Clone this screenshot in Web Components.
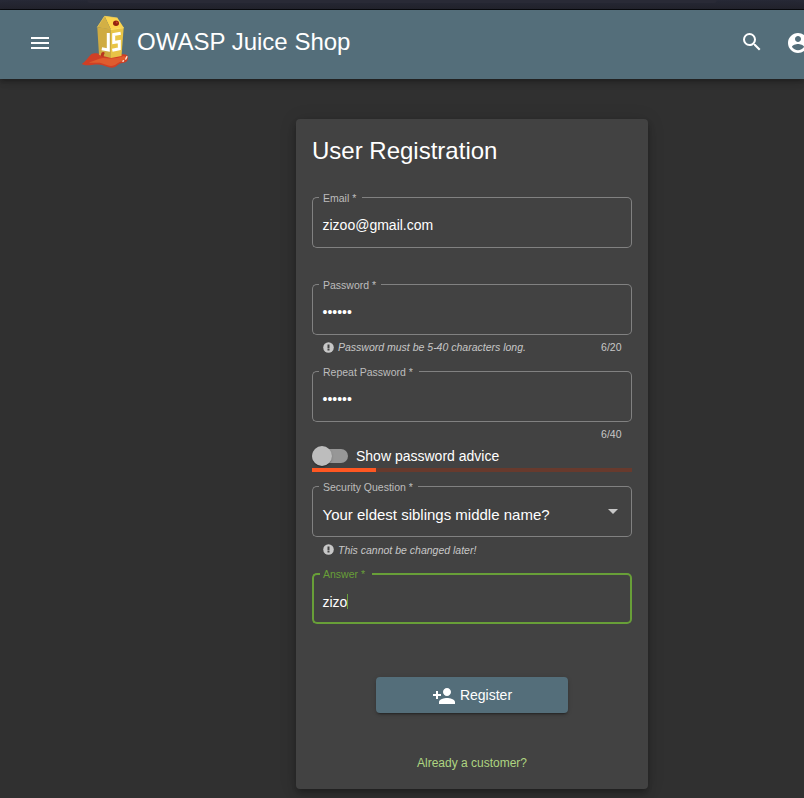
<!DOCTYPE html>
<html lang="en">
<head>
<meta charset="utf-8">
<title>OWASP Juice Shop</title>
<style>
html,body{margin:0;height:798px;overflow:hidden;background:#303030;color:#fff;font-family:"Liberation Sans",Arial,sans-serif;}
</style>
</head>
<body>
<juice-app></juice-app>
<script>
const define = (name, html, setup) => customElements.define(name, class extends HTMLElement {
  constructor() {
    super();
    const t = document.createElement('template');
    t.innerHTML = html;
    this.attachShadow({mode: 'open'}).appendChild(t.content.cloneNode(true));
  }
  connectedCallback() { if (setup) setup(this, this.shadowRoot); }
});

define('juice-logo', `
<style>:host{display:block;width:50px;height:56px}svg{display:block}</style>
<svg width="50" height="56" viewBox="0 0 50 56">
  <path d="M0.7 50C5 47.5 7 43 10.5 40C13 38.5 17 39.5 20 40L40 40.5C44 39.5 47.5 41 47 44C47 47.5 44.5 48.7 41.5 49C37 49 36 53.7 30.7 53.7C25 53.5 23 50.5 17 50.5C10 50.5 5 52.5 0.7 50Z" fill="#cf3f25"/>
  <path d="M8 48.5C13 47 17 44.5 22 44C30 45 36 44.5 43 42C46 43 45 47 41 47.5C36 48 35 52 30 52C25 51.5 22 48.8 17 48.8C13 48.5 11 49 8 48.5Z" fill="#df5c2e"/>
  <path d="M16.3 13.3L29.8 15L30 44L18 41Z" fill="#cfab42"/>
  <path d="M29.8 15L42.7 13.5L40.5 42L30 44Z" fill="#e8c446"/>
  <path d="M23.5 2L36.5 4L42.7 13.5L29.8 15.5Z" fill="#fdd54e"/>
  <path d="M23.5 2L16.3 13.3L29.8 15.5Z" fill="#d3b045"/>
  <path d="M16.3 13.3L23.5 2.3L36.5 4" fill="none" stroke="#edca55" stroke-width=".8"/>
  <path d="M29.8 15.5L42.7 13.7" stroke="#ffe067" stroke-width="1"/>
  <ellipse cx="35" cy="9.2" rx="3" ry="2.7" fill="#94230f"/>
  <circle cx="35.8" cy="8.6" r="1" fill="#c94024"/>
  <path d="M27.3 19V36L20.8 34.8" fill="none" stroke="#fff" stroke-width="3"/>
  <path d="M39.7 19.2L32.7 20.5V28.5L38.3 27.5V34.8L31.3 36.3" fill="none" stroke="#fff" stroke-width="3"/>
  <path d="M20 42Q19.5 38 22.5 38Q24.5 38.5 23 40.5L22.5 43Z" fill="#b93620"/>
  <path d="M44.8 45L45.8 42.8M42 47.3L42.5 46.8" stroke="#ffe4d3" stroke-width="1.5" stroke-linecap="round"/>
</svg>`);

define('juice-toolbar', `
<style>
:host{display:block;position:relative;z-index:1}
.strip{height:9px;background:linear-gradient(#272936,#22232d);border-bottom:1px solid #0b0c10;display:flex;justify-content:center}
.strip i{width:630px;height:3px;background:#292a36;border-radius:0 0 5px 5px}
.bar{height:69px;background:#546e7a;display:flex;align-items:center;box-shadow:0 2px 4px -1px rgba(0,0,0,.2),0 4px 5px rgba(0,0,0,.14),0 1px 10px rgba(0,0,0,.12)}
svg{display:block;fill:#fff;flex:none}
.menu{margin:-3px 29px 0 28px}
juice-logo{margin:-5px 6px 0 0;flex:none}
.name{font-size:24px;line-height:32px;margin-top:-5px;flex:1;white-space:nowrap}
</style>
<div class="strip"><i></i></div>
<div class="bar">
<svg class="menu" width="24" height="24" viewBox="0 0 24 24"><path d="M3 18h18v-2H3v2zm0-5h18v-2H3v2zm0-7v2h18V6H3z"/></svg>
<juice-logo></juice-logo><span class="name">OWASP Juice Shop</span>
<svg style="margin:-5px 22px 0 0" width="24" height="24" viewBox="0 0 24 24"><path d="M15.5 14h-.79l-.28-.27A6.471 6.471 0 0 0 16 9.5 6.5 6.5 0 1 0 9.5 16c1.61 0 3.09-.59 4.23-1.57l.27.28v.79l5 4.99L20.49 19l-4.99-5zm-6 0C7.01 14 5 11.99 5 9.5S7.01 5 9.5 5 14 7.01 14 9.5 11.99 14 9.5 14z"/></svg>
<svg style="margin:-3px -6px 0 0" width="24" height="24" viewBox="0 0 24 24"><path d="M12 2C6.48 2 2 6.48 2 12s4.48 10 10 10 10-4.48 10-10S17.52 2 12 2zm0 3c1.66 0 3 1.34 3 3s-1.34 3-3 3-3-1.34-3-3 1.34-3 3-3zm0 14.2c-2.5 0-4.71-1.28-6-3.22.03-1.99 4-3.08 6-3.08 1.99 0 5.97 1.09 6 3.08-1.29 1.94-3.5 3.22-6 3.22z"/></svg>
</div>`);

define('juice-field', `
<style>
:host{display:block;height:51px;--line:#818181;--w:1px;--label:#bdbdbd}
:host([focused]){--line:#689f38;--w:2px;--label:#689f38}
.box{display:grid;height:51px}
.outline,.value{grid-area:1/1}
.outline{display:flex;height:51px}
.outline>*{box-sizing:border-box;border:0 solid var(--line)}
.a{width:7px;border-width:var(--w) 0 var(--w) var(--w);border-radius:5px 0 0 5px}
:host([focused]) .a{width:8px}
.b{border-bottom-width:var(--w);width:var(--notch);padding-left:4px;box-sizing:border-box}
:host([focused]) .b{padding-left:3px}
.b span{display:block;font-size:10.5px;line-height:12px;margin-top:-5px;color:var(--label);white-space:nowrap}
.c{flex:1;border-width:var(--w) var(--w) var(--w) 0;border-radius:0 5px 5px 0}
.value{display:flex;align-items:center;padding:4px 14px 0 10.5px;font-size:14px;line-height:18px;white-space:nowrap}
:host([focused]) .value{padding-top:6px}
:host([select]) .value{font-size:15px;padding-top:7px}
.arrow{display:none;margin:-7px 0 0 auto;border:5px solid transparent;border-top-color:#c7c7c7;border-bottom:0}
:host([select]) .arrow{display:block}
.caret{display:none;width:1px;height:15px;background:#689f38}
:host([focused]) .caret{display:block}
</style>
<div class="box"><div class="outline"><div class="a"></div><div class="b"><span></span></div><div class="c"></div></div>
<div class="value"><slot></slot><i class="caret"></i><i class="arrow"></i></div></div>`,
(el, root) => {
  root.querySelector('.b span').textContent = el.getAttribute('label');
  root.querySelector('.b').style.setProperty('--notch', el.getAttribute('notch') + 'px');
});

define('juice-hint', `
<style>
:host{display:flex;align-items:center;height:12px;padding:0 10.5px;font-size:10.5px;line-height:12px;color:#c7c7c7}
svg{display:none;margin:var(--icon-shift,-1px) 4.5px 0 0}
:host([icon]) svg{display:block}
em{white-space:nowrap}
slot[name=count]{display:block;margin-left:auto}
</style>
<svg width="11" height="11" viewBox="0 0 11 11"><circle cx="5.5" cy="5.5" r="5.3" fill="#c7c7c7"/><path d="M4.5 2.4h2v4h-2zM4.5 7h2v1.400h-2z" fill="#424242"/></svg>
<em><slot></slot></em><slot name="count"></slot>`);

define('juice-toggle', `
<style>
:host{display:flex;align-items:center;height:24px;font-size:14px;line-height:18px}
.track{width:36px;height:14px;border-radius:7px;background:#979797;display:flex;align-items:center;margin-right:8px}
.thumb{width:20px;height:20px;border-radius:50%;background:#bdbdbd;box-shadow:0 2px 1px -1px rgba(0,0,0,.2),0 1px 1px rgba(0,0,0,.14),0 1px 3px rgba(0,0,0,.12)}
</style>
<div class="track"><div class="thumb"></div></div><slot></slot>`);

define('juice-progress', `
<style>:host{display:flex;height:4px;background:#683a2d}i{width:20%;background:#ff5722}</style><i></i>`);

define('juice-button', `
<style>
:host{display:flex;align-items:center;justify-content:center;gap:4px;width:192px;height:36px;border-radius:4px;background:#546e7a;font-size:14px;box-shadow:0 3px 1px -2px rgba(0,0,0,.2),0 2px 2px rgba(0,0,0,.14),0 1px 5px rgba(0,0,0,.12)}
svg{fill:#fff;margin-top:1px}
</style>
<svg width="24" height="24" viewBox="0 0 24 24"><path d="M15 12c2.21 0 4-1.79 4-4s-1.79-4-4-4-4 1.79-4 4 1.79 4 4 4zm-9-2V7H4v3H1v2h3v3h2v-3h3v-2H6zm9 4c-2.67 0-8 1.34-8 4v2h16v-2c0-2.66-5.33-4-8-4z"/></svg><slot></slot>`);

define('juice-card', `
<style>
:host{display:flex;flex-direction:column;box-sizing:border-box;width:352px;height:670px;padding:16px;border-radius:4px;background:#424242;box-shadow:0 3px 5px -1px rgba(0,0,0,.2),0 6px 10px rgba(0,0,0,.14),0 1px 18px rgba(0,0,0,.12)}
h1{margin:0;font-size:24px;font-weight:400;line-height:32px}
</style>
<h1><slot name="title"></slot></h1><slot></slot>`);

define('juice-app', `
<style>
:host{display:block;height:798px}
main{display:flex;padding:40px 0 0 296px}
.link{align-self:center;margin-top:42px;font-size:12px;line-height:16px;color:#aed581}
juice-button{align-self:center;margin-top:53px}
</style>
<juice-toolbar></juice-toolbar>
<main><juice-card>
<span slot="title">User Registration</span>
<juice-field label="Email *" notch="43" style="margin-top:30px">zizoo@gmail.com</juice-field>
<juice-field label="Password *" notch="62" style="margin-top:36px">••••••</juice-field>
<juice-hint icon style="margin-top:6px;--icon-shift:1px">Password must be 5-40 characters long.<span slot="count">6/20</span></juice-hint>
<juice-field label="Repeat Password *" notch="100" style="margin-top:18px">••••••</juice-field>
<juice-hint style="margin-top:6px"><span slot="count">6/40</span></juice-hint>
<juice-toggle style="margin-top:4px">Show password advice</juice-toggle>
<juice-progress></juice-progress>
<juice-field select label="Security Question *" notch="99" style="margin-top:14px">Your eldest siblings middle name?</juice-field>
<juice-hint icon style="margin-top:7px">This cannot be changed later!</juice-hint>
<juice-field focused label="Answer *" notch="52" style="margin-top:17px">zizo</juice-field>
<juice-button>Register</juice-button>
<span class="link">Already a customer?</span>
</juice-card></main>`);
</script>
</body>
</html>
